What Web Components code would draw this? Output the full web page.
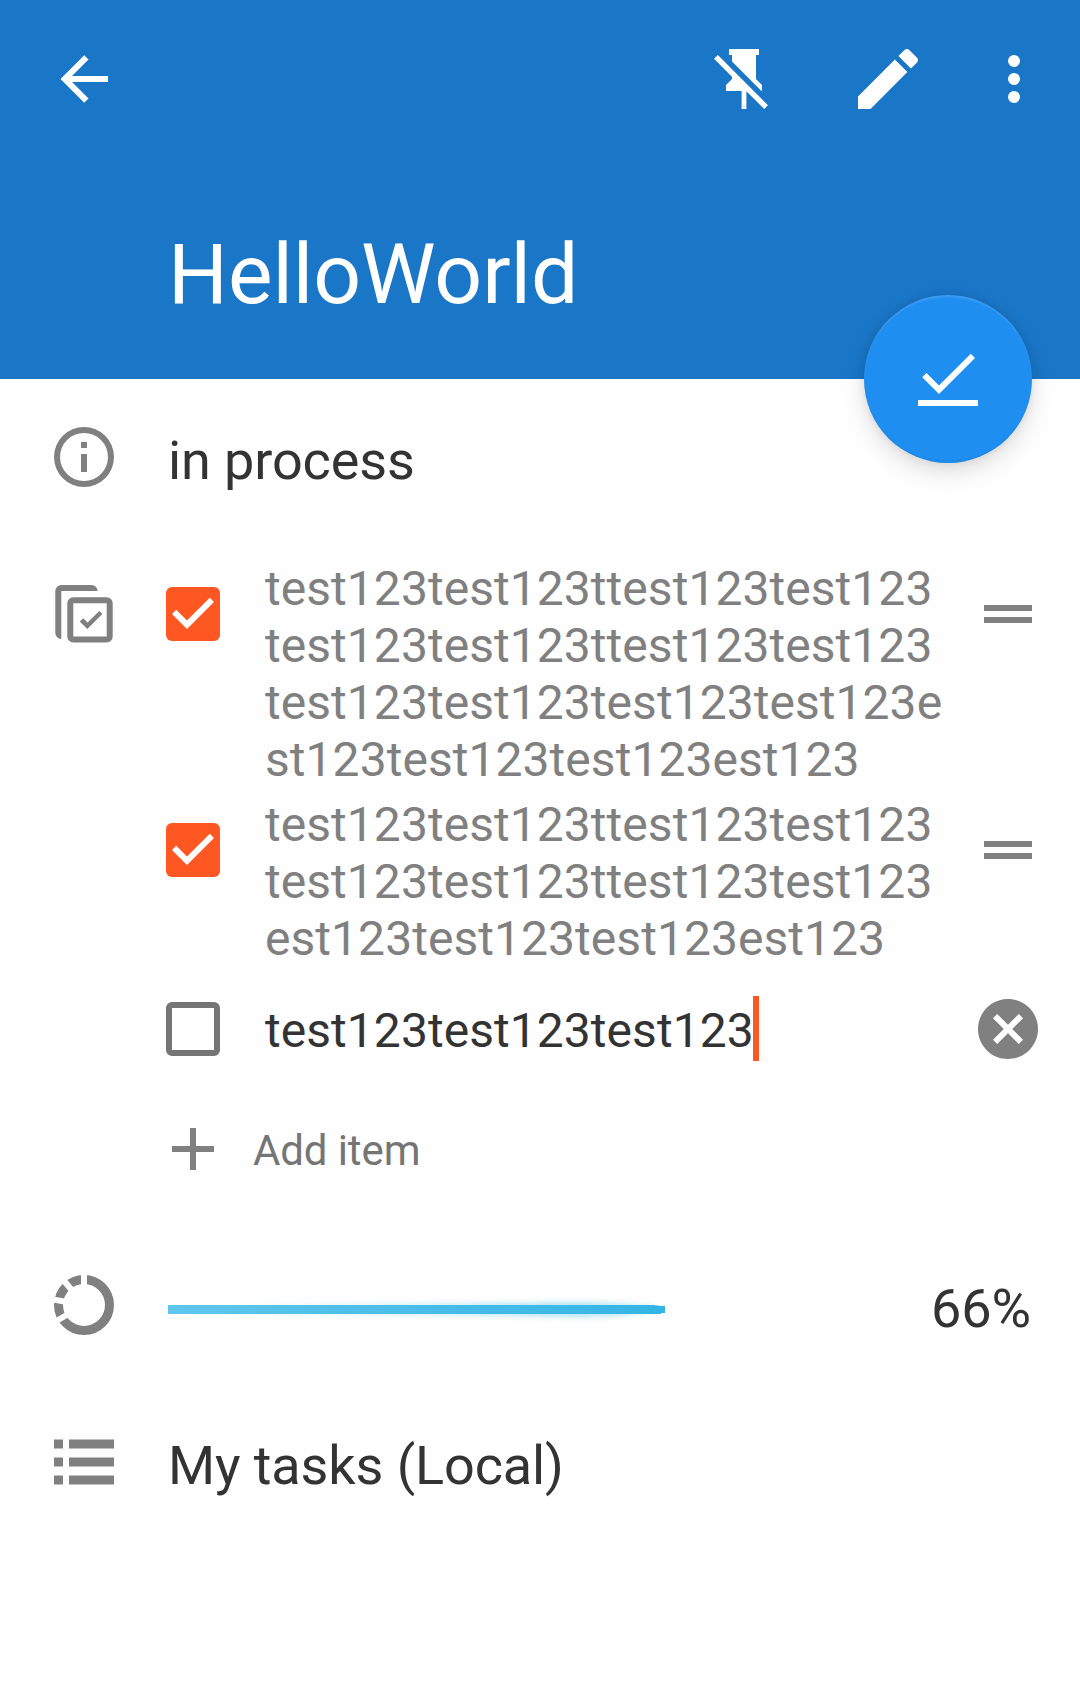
<!DOCTYPE html>
<html lang="en">
<head>
<meta charset="utf-8">
<title>HelloWorld</title>
<style>
html,body{margin:0;padding:0}
body{background:#fefefe;font-family:Roboto,"Noto Sans",sans-serif;color:#333;width:1080px;height:1699px;overflow:hidden}
</style>
</head>
<body>
<task-screen>
  <task-header slot="header">HelloWorld</task-header>
  <detail-row icon="info" style="height:139px;padding-top:42px;--drop:8px">in process</detail-row>
  <detail-row icon="checklist" style="height:691px;--icon-drop:18px;padding-top:0">
    <check-list>
      <check-item checked>test123test123ttest123test123<br>test123test123ttest123test123<br>test123test123test123test123e<br>st123test123test123est123</check-item>
      <check-item checked>test123test123ttest123test123<br>test123test123ttest123test123<br>est123test123test123est123</check-item>
      <check-item editing>test123test123test123</check-item>
      <add-item>Add item</add-item>
    </check-list>
  </detail-row>
  <detail-row icon="progress" style="height:157px;padding-top:18px;--drop:8px">
    <progress-line value="66"></progress-line>
  </detail-row>
  <detail-row icon="list" style="--drop:8px">My tasks (Local)</detail-row>
</task-screen>
<script>
const ICONS = {
  back: '<path d="M20,11V13H8L13.5,18.5L12.08,19.92L4.16,12L12.08,4.08L13.5,5.5L8,11H20Z"/>',
  unpin: '<path d="M2,5.27L3.28,4L20,20.72L18.73,22L12.8,16.07V22H11.2V16H6V14L8,12V11.27L2,5.27M16,12L18,14V16H17.82L8,6.18V4H7V2H17V4H16V12Z"/>',
  edit: '<path transform="translate(12 12) scale(1.1111) translate(-12 -12)" d="M20.71,7.04C21.1,6.65 21.1,6 20.71,5.63L18.37,3.29C18,2.9 17.35,2.9 16.96,3.29L15.12,5.12L18.87,8.87M3,17.25V21H6.75L17.81,9.93L14.06,6.18L3,17.25Z"/>',
  more: '<circle cx="12" cy="6" r="2"/><circle cx="12" cy="12" r="2"/><circle cx="12" cy="18" r="2"/>',
  done: '<path d="M19.59,3.59L9,14.17L4.83,10L3.41,11.41L9,17L21,5ZM2,19H22V21H2Z"/>',
  info: '<path d="M11,9H13V7H11M12,20A8,8 0 1,1 12,4A8,8 0 0,1 12,20M12,2A10,10 0 1,0 12,22A10,10 0 0,0 12,2M11,17H13V11H11V17Z" fill-rule="evenodd"/>',
  checklist: '<g transform="scale(.33333)"><path d="M7.3 55V13A6 6 0 0 1 13.3 7H43.5A6 6 0 0 1 49.6 13H13.3V61A6 6 0 0 1 7.3 55Z"/><path fill-rule="evenodd" d="M25.3 19.3H58.7A6 6 0 0 1 64.7 25.3V58.4A6 6 0 0 1 58.7 64.4H25.3A6 6 0 0 1 19.3 58.4V25.3A6 6 0 0 1 25.3 19.3ZM25.3 25.3V58.4H58.7V25.3Z"/><path d="M31.7 43.4L35.2 40.2L39.6 44.4L51.3 32.9L54.4 36L39.3 51Z"/></g>',
  progress: '<mask id="m"><rect width="24" height="24" fill="#fff"/><g stroke="#000" stroke-width="2"><path d="M12 12V0"/><path d="M12 12V0" transform="rotate(-39.5 12 12)"/><path d="M12 12V0" transform="rotate(-80 12 12)"/><path d="M12 12V0" transform="rotate(-120 12 12)"/></g></mask><circle cx="12" cy="12" r="8.5" fill="none" stroke="currentColor" stroke-width="3" mask="url(#m)"/>',
  list: '<path d="M2,4.5H5V7.5H2ZM7,4.5H22V7.5H7ZM2,10.5H5V13.5H2ZM7,10.5H22V13.5H7ZM2,16.5H5V19.5H2ZM7,16.5H22V19.5H7Z"/>',
  drag: '<path d="M4,9H20V11H4ZM4,13H20V15H4Z"/>',
  clear: '<path d="M12,2C17.53,2 22,6.47 22,12C22,17.53 17.53,22 12,22C6.47,22 2,17.53 2,12C2,6.47 6.47,2 12,2M15.59,7L12,10.59L8.41,7L7,8.41L10.59,12L7,15.59L8.41,17L12,13.41L15.59,17L17,15.59L13.41,12L17,8.41L15.59,7Z"/>',
  plus: '<path d="M19,13H13V19H11V13H5V11H11V5H13V11H19V13Z"/>',
  checked: '<rect x="3" y="3" width="18" height="18" rx="2" fill="#ff5722"/><path fill="#fff" d="M10,17L5,12L6.41,10.58L10,14.17L17.59,6.58L19,8Z"/>',
  unchecked: '<path fill="#757575" fill-rule="evenodd" d="M5,3H19A2,2 0 0 1 21,5V19A2,2 0 0 1 19,21H5A2,2 0 0 1 3,19V5A2,2 0 0 1 5,3M5,5V19H19V5Z"/>'
};

const define = (name, render) => customElements.define(name, class extends HTMLElement {
  constructor() { super(); this.attachShadow({mode: 'open'}); }
  connectedCallback() { this.shadowRoot.innerHTML = render(this); }
});

define('md-icon', el => `<style>
  :host{display:block;flex:none;width:72px;height:72px;color:#808080}
  svg{display:block;width:72px;height:72px;fill:currentColor}
</style><svg viewBox="0 0 24 24" aria-hidden="true">${ICONS[el.getAttribute('name')]}</svg>`);

define('fab-button', () => `<style>
  :host{display:flex;align-items:center;justify-content:center;width:168px;height:168px;border-radius:50%;background:#1f8ef1;
    box-shadow:0 9px 22px rgba(0,0,0,.13),0 0 9px rgba(0,0,0,.08),inset 0 3px 2px -1px rgba(255,255,255,.13),inset 0 -3px 2px -1px rgba(0,0,0,.05)}
  md-icon{color:#fff}
</style><md-icon name="done"></md-icon>`);

define('task-header', () => `<style>
  :host{display:flex;flex-direction:column;position:relative;height:379px;background:#1a76c7;color:#fff}
  nav{display:flex;padding:43px 30px 0 48px}
  md-icon{color:#fff}
  .space{flex:1}
  .edit{margin:0 54px 0 72px}
  h1{margin:110px 0 0 168px;font-size:84px;line-height:99px;font-weight:400;letter-spacing:-.03px}
  fab-button{position:absolute;right:48px;bottom:-84px}
</style>
<nav><md-icon name="back"></md-icon><span class="space"></span><md-icon name="unpin"></md-icon><md-icon class="edit" name="edit"></md-icon><md-icon name="more"></md-icon></nav>
<h1><slot></slot></h1><fab-button></fab-button>`);

define('detail-row', el => `<style>
  :host{display:flex;align-items:flex-start;gap:48px;padding-left:48px;font-size:54px;line-height:63px;letter-spacing:-.11px}
  md-icon{margin-top:var(--icon-drop,0)}
  .content{flex:1;min-width:0;padding-top:var(--drop,0)}
</style><md-icon name="${el.getAttribute('icon')}"></md-icon><div class="content"><slot></slot></div>`);

define('check-list', () => `<style>
  :host{display:flex;flex-direction:column;gap:8px;margin-left:-11px}
</style><slot></slot>`);

define('check-item', el => {
  const editing = el.hasAttribute('editing'), checked = el.hasAttribute('checked');
  return `<style>
  :host{display:flex;align-items:flex-start;padding-right:36px;font-size:48px;line-height:57px;letter-spacing:.05px;color:${checked ? '#808080' : '#333'};${editing ? 'height:108px' : ''}}
  md-icon{margin-top:18px}
  .text{flex:1;display:flex;align-items:flex-start;margin-left:36px;white-space:nowrap;padding-top:${editing ? 27 : 0}px}
  .caret{width:6px;height:65px;margin:-6px 0 0 -1px;background:#ff5722}
</style><md-icon name="${checked ? 'checked' : 'unchecked'}"></md-icon>
<div class="text"><div><slot></slot></div>${editing ? '<span class="caret"></span>' : ''}</div>
<md-icon name="${editing ? 'clear' : 'drag'}"></md-icon>`;
});

define('add-item', () => `<style>
  :host{display:flex;align-items:flex-start;gap:24px;margin-top:22px;font-size:42px;line-height:49px;color:#757575}
  span{padding-top:13px}
</style><md-icon name="plus"></md-icon><span><slot></slot></span>`);

define('progress-line', el => `<style>
  :host{display:flex;align-items:flex-start;justify-content:space-between;padding-right:49px}
  svg{display:block;margin-top:18px}
</style>
<svg width="510" height="29" viewBox="0 0 510 29" role="progressbar" aria-valuenow="${el.getAttribute('value')}">
  <defs>
    <linearGradient id="bar"><stop offset="0" stop-color="#5fc6ec"/><stop offset="1" stop-color="#33b5e5"/></linearGradient>
    <linearGradient id="glow"><stop offset="0" stop-color="#33b5e5" stop-opacity="0"/><stop offset=".8" stop-color="#33b5e5" stop-opacity=".32"/><stop offset="1" stop-color="#33b5e5" stop-opacity=".2"/></linearGradient>
    <filter id="soft" x="-5%" y="-60%" width="110%" height="220%"><feGaussianBlur stdDeviation="2"/></filter>
  </defs>
  <path d="M60 9L300 7.5L420 6.5Q460 7 488 11V17Q460 22 420 22.5L300 21L60 19Z" fill="url(#glow)" filter="url(#soft)"/>
  <path d="M0 10H485L493 11H497V18H493V19H0Z" fill="url(#bar)"/>
</svg><span>${el.getAttribute('value')}%</span>`);

define('task-screen', () => `<style>
  :host{display:flex;flex-direction:column;width:1080px;min-height:1699px;background:#fefefe}
  ::slotted(task-header){z-index:1}
</style><slot name="header"></slot><slot></slot>`);
</script>
</body>
</html>
